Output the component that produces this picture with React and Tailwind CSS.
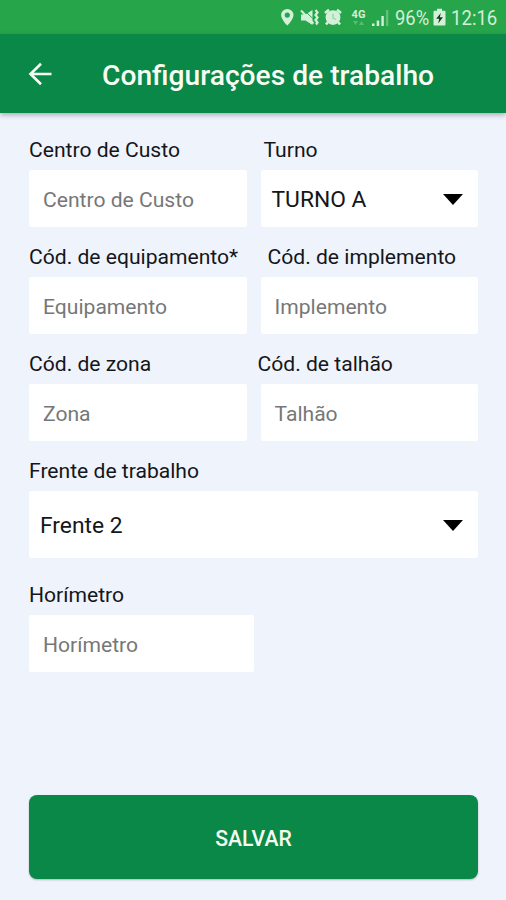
import { useState } from 'react';

function StatusBar() {
  return (
    <div className="flex h-[34px] items-center bg-[#27a54b] pl-[280px] text-[#d3f0d8]">
      {/* Location */}
      <svg className="h-[18px] w-[14px] shrink-0" viewBox="0 0 14 18" fill="currentColor">
        <path fillRule="evenodd" d="M7.300 1A6.200 6.200 0 0 0 1.100 7.200C1.100 11.200 7.300 17.600 7.300 17.600S13.500 11.200 13.500 7.200A6.200 6.200 0 0 0 7.300 1Zm0 3.500a2.600 2.600 0 1 1 0 5.200a2.600 2.600 0 0 1 0-5.200Z" />
      </svg>

      {/* Muted, vibrating */}
      <svg className="ml-[6px] h-[18px] w-[19px] shrink-0" viewBox="0 0 19 18" fill="none" stroke="currentColor">
        <path d="M1 6.500h4.500L12.500 2v15L5.500 12.500H1Z" fill="currentColor" stroke="none" />
        <path d="M6 4 12.800 10.500" stroke="#27a54b" strokeWidth="1" />
        <path d="M1 2.500 13.500 15.500" strokeWidth="2" />
        <path d="m15.500 2 2 2.500-2 2.500 2 2.500-2 2.500 2 2.500-1.500 2" strokeWidth="2.200" />
      </svg>

      {/* Alarm */}
      <svg className="ml-[5px] h-[18px] w-[18px] shrink-0" viewBox="0 0 18 18" fill="none" stroke="currentColor">
        <path d="M1 5 5 1.700M17 5 13 1.700" strokeWidth="2.600" />
        <circle cx="9" cy="9.600" r="7.400" fill="currentColor" stroke="none" />
        <path d="m4 14-2 2.500M14 14l2 2.500" strokeWidth="2.600" />
        <path d="M9 5.800v4.200l2.800 1.600" stroke="#8fd3a0" strokeWidth="1.200" />
      </svg>

      {/* Mobile data */}
      <div className="ml-[9px] flex w-[15px] shrink-0 flex-col items-center">
        <span className="text-[11px] font-bold leading-[11px]">4G</span>
        <svg className="h-[6px] w-[11px] opacity-30" viewBox="0 0 11 6" fill="currentColor">
          <path d="M0 1h5L2.500 5ZM6 5h5L8.500 1Z" />
        </svg>
      </div>

      {/* Signal */}
      <svg className="ml-[6px] h-[18px] w-[17px] shrink-0" viewBox="0 0 17 18" fill="currentColor">
        <path d="M0 15.500h2.500v2.500H0ZM4.700 12.500h2.500v5.500H4.700ZM9.400 8h2.400v10H9.400Z" />
        <path d="M14 2h2.300v16H14Z" opacity=".35" />
      </svg>

      <span className="ml-[6px] w-[38px] origin-left scale-x-[0.92] pt-[2px] text-[20px] leading-none">96%</span>

      {/* Battery */}
      <svg className="h-[18px] w-[13px] shrink-0" viewBox="0 0 13 18" fill="currentColor">
        <path d="M4 .8h5v2h2.500a1 1 0 0 1 1 1V16.500a1 1 0 0 1-1 1h-10a1 1 0 0 1-1-1V3.800a1 1 0 0 1 1-1H4Z" />
        <path d="M7.800 5 3.200 10.800h3L5.200 15.500 9.900 9.300H6.800Z" fill="#123c1d" />
      </svg>

      <span className="ml-[5px] origin-left scale-x-[0.93] pt-[2px] text-[20px] leading-none">12:16</span>
    </div>
  );
}

function Header() {
  return (
    <header className="relative flex h-[79px] items-center bg-[#0a8848] pl-[28px] text-[#f7fdf3] shadow-[0_2px_5px_rgba(60,50,80,0.38)]">
      <button aria-label="Voltar">
        <svg className="h-6 w-6" viewBox="0 0 24 24" fill="none" stroke="currentColor" strokeWidth="2.600">
          <path d="M23.500 12H3M13 1.800 2.500 12 13 22.200" />
        </svg>
      </button>
      <h1 className="ml-[50px] whitespace-nowrap pt-1 text-[28.2px] font-medium leading-8">Configurações de trabalho</h1>
    </header>
  );
}

function Label({ children, className = '' }) {
  return (
    <label className={`mb-[7px] block h-[27px] whitespace-nowrap pt-px text-[21.1px] leading-[26px] text-[#14161a] ${className}`}>
      {children}
    </label>
  );
}

function TextField({ label, placeholder, labelClass }) {
  const [value, setValue] = useState('');

  return (
    <div>
      <Label className={labelClass}>{label}</Label>
      <input
        value={value}
        onChange={(e) => setValue(e.target.value)}
        placeholder={placeholder}
        className="block h-[57px] w-full rounded-[2px] bg-white px-[14px] pt-[2px] text-[21.1px] text-black outline-none placeholder:text-[#777777]"
      />
    </div>
  );
}

function SelectField({ label, value, labelClass, boxClass }) {
  return (
    <div>
      <Label className={labelClass}>{label}</Label>
      <button className={`flex w-full items-center justify-between rounded-[2px] bg-white pr-[15px] text-[22.8px] text-[#14161a] ${boxClass}`}>
        <span className="pt-[4px]">{value}</span>
        <svg className="mt-px h-[11px] w-5" viewBox="0 0 20 11" fill="black">
          <path d="M0 0h20L10 11Z" />
        </svg>
      </button>
    </div>
  );
}

export default function App() {
  return (
    <div className="flex h-[900px] w-[506px] flex-col overflow-hidden bg-[#eff3fb] font-[Roboto,sans-serif]">
      <StatusBar />
      <Header />

      <main className="flex flex-1 flex-col pt-[23px] pr-[28px] pl-[29px]">
        <div className="grid grid-cols-2 gap-x-[14px] gap-y-4">
          <TextField label="Centro de Custo" placeholder="Centro de Custo" />
          <SelectField label="Turno" value="TURNO A" labelClass="pl-[3px]" boxClass="h-[57px] pl-[11px]" />
          <TextField label="Cód. de equipamento*" placeholder="Equipamento" />
          <TextField label="Cód. de implemento" placeholder="Implemento" labelClass="pl-[7px]" />
          <TextField label="Cód. de zona" placeholder="Zona" />
          <TextField label="Cód. de talhão" placeholder="Talhão" labelClass="-ml-[3px]" />
        </div>

        <div className="mt-4">
          <SelectField label="Frente de trabalho" value="Frente 2" boxClass="h-[67px] pl-[11px]" />
        </div>

        <div className="mt-[23px] w-[225px]">
          <TextField label="Horímetro" placeholder="Horímetro" />
        </div>

        <button className="mt-auto mb-[21px] h-[84px] w-full rounded-lg bg-[#0a8848] pt-[4px] text-[21.2px] font-medium text-[#f3fbee] shadow-[0_1px_2px_rgba(0,0,0,0.25)]">
          SALVAR
        </button>
      </main>
    </div>
  );
}
